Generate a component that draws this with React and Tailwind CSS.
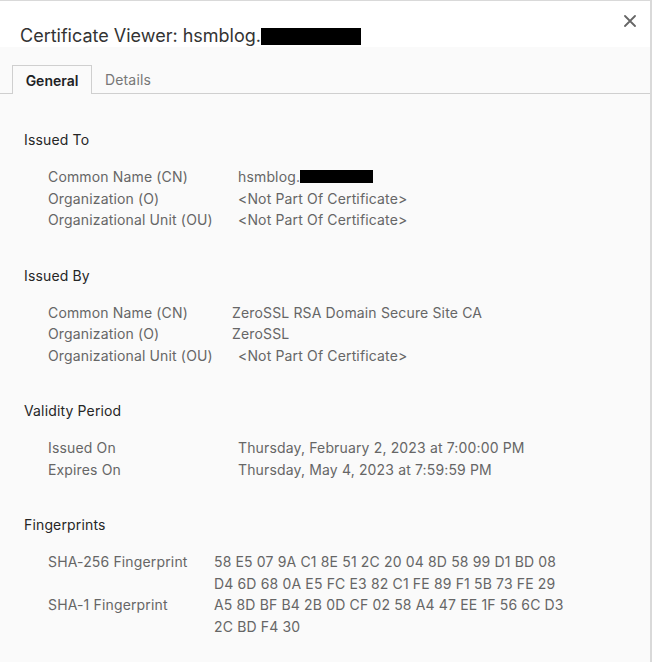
import React from 'react';

const font = { fontFamily: 'Inter, "Noto Sans", sans-serif' };

const sections = [
    {
        title: 'Issued To',
        labelWidth: 'w-[190px]',
        rows: [
            { label: 'Common Name (CN)', value: 'hsmblog.', redact: true },
            { label: 'Organization (O)', value: '<Not Part Of Certificate>' },
            { label: 'Organizational Unit (OU)', value: '<Not Part Of Certificate>' },
        ],
    },
    {
        title: 'Issued By',
        labelWidth: 'w-[184px]',
        rows: [
            { label: 'Common Name (CN)', value: 'ZeroSSL RSA Domain Secure Site CA' },
            { label: 'Organization (O)', value: 'ZeroSSL' },
            { label: 'Organizational Unit (OU)', value: '<Not Part Of Certificate>', wide: true },
        ],
    },
    {
        title: 'Validity Period',
        labelWidth: 'w-[190px]',
        rows: [
            { label: 'Issued On', value: 'Thursday, February 2, 2023 at 7:00:00 PM' },
            { label: 'Expires On', value: 'Thursday, May 4, 2023 at 7:59:59 PM' },
        ],
    },
    {
        title: 'Fingerprints',
        labelWidth: 'w-[166px]',
        rows: [
            { label: 'SHA-256 Fingerprint', value: '58 E5 07 9A C1 8E 51 2C 20 04 8D 58 99 D1 BD 08 D4 6D 68 0A E5 FC E3 82 C1 FE 89 F1 5B 73 FE 29' },
            { label: 'SHA-1 Fingerprint', value: 'A5 8D BF B4 2B 0D CF 02 58 A4 47 EE 1F 56 6C D3 2C BD F4 30' },
        ],
    },
];

const Section = ({ section }) => (
    <div className="mb-[35px]">
        <h2 className="text-[14px] leading-[20px] tracking-[0.15px] text-[#262626]">{section.title}</h2>
        <div className="mt-[16px] pl-[24px]">
            {section.rows.map((row) => (
                <div key={row.label} className="flex text-[14px] leading-[21.5px] tracking-[0.15px] text-[#666]">
                    <div className={`${row.wide ? 'w-[190px]' : section.labelWidth} shrink-0`}>{row.label}</div>
                    <div className="w-[352px] flex items-center">
                        <span>{row.value}</span>
                        {row.redact && <span className="inline-block w-[73px] h-[13px] bg-black" />}
                    </div>
                </div>
            ))}
        </div>
    </div>
);

export default function App() {
    return (
        <div style={font} className="relative w-[652px] h-[662px] bg-[#fafafa] border-t border-r-2 border-[#d9d9d9] overflow-hidden">

            {/* Header */}
            <div className="bg-white h-[46px] pl-[20px] pt-[24px] flex items-start">
                <span className="text-[18px] leading-[22px] text-[#333]">Certificate Viewer: hsmblog.</span>
                <span className="inline-block w-[100px] h-[17px] bg-black mt-[3px]" />
            </div>
            <button className="absolute top-[14px] right-[14px] text-[#666]">
                <svg width="12" height="12" viewBox="0 0 12 12">
                    <path d="M1 1 L11 11 M11 1 L1 11" stroke="#666" strokeWidth="1.8" strokeLinecap="round" />
                </svg>
            </button>

            {/* Tabs */}
            <div className="mt-[18px] flex items-end border-b border-[#cfcfcf] pl-[12px]">
                <div className="h-[29px] w-[80px] border border-b-0 border-[#cfcfcf] bg-[#fafafa] -mb-px flex items-center justify-center text-[14px] font-semibold text-[#202124]">
                    General
                </div>
                <div className="h-[28px] px-[13px] flex items-center text-[14px] tracking-[0.15px] text-[#777]">
                    Details
                </div>
            </div>

            {/* Body */}
            <div className="pl-[24px] pt-[36px]">
                {sections.map((s) => (
                    <Section key={s.title} section={s} />
                ))}
            </div>
        </div>
    );
}
